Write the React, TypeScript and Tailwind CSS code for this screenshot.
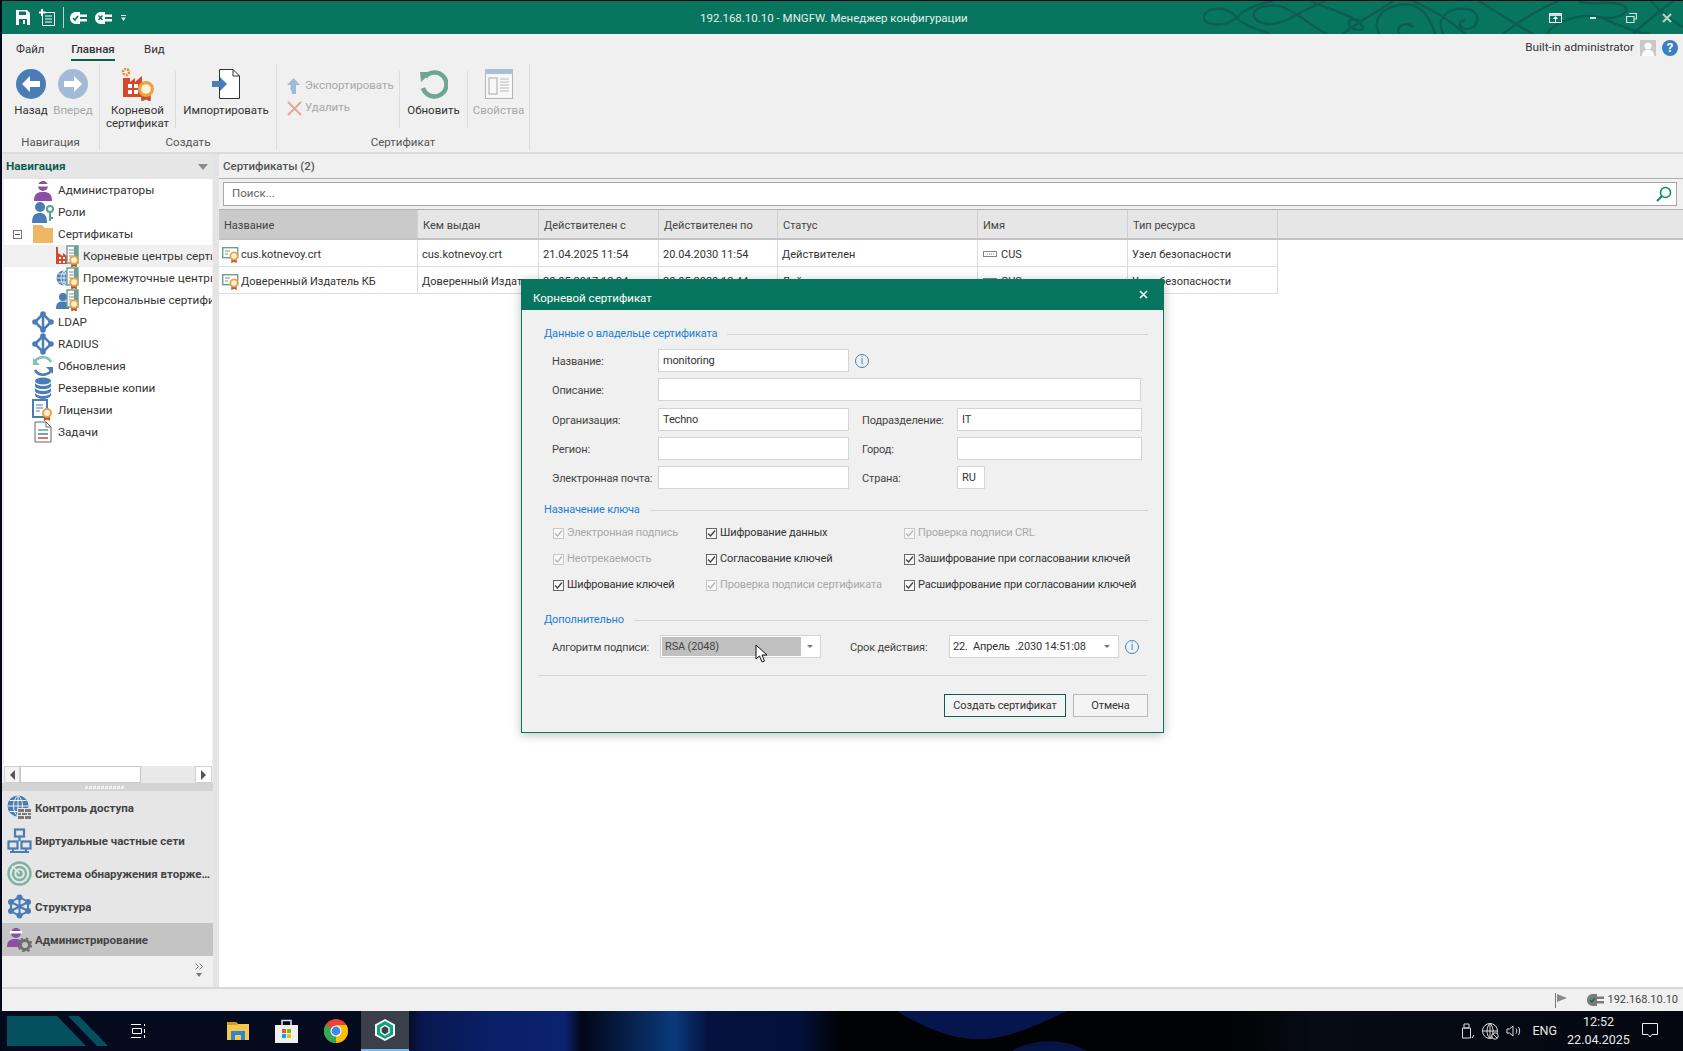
import { ReactNode } from "react";

const Medal = ({ x = 0, y = 0, s = 1 }: { x?: number; y?: number; s?: number }) => (
    <g transform={`translate(${x} ${y}) scale(${s})`}>
        <path d="M-3 3 L-3 8 L0 6.5 L3 8 L3 3 Z" fill="#c9502f" />
        <circle cx="0" cy="0" r="4" fill="#fdf3e0" stroke="#eda33e" strokeWidth="2" />
    </g>
);

const CertDoc = ({ x = 0, y = 0 }: { x?: number; y?: number }) => (
    <g transform={`translate(${x} ${y})`}>
        <path d="M0 0 H11 V17 H0 Z" fill="#ffffff" stroke="#6b9f92" strokeWidth="1.4" />
        <path d="M7 0 H11 V17 H7 Z" fill="#6b9f92" />
        <path d="M2 4 H7 M2 7 H7 M2 10 H5" stroke="#8a8a8a" strokeWidth="1" />
    </g>
);

function NavIcon({ kind }: { kind: string }) {
    const blue = "#4a7db5";
    const body: Record<string, ReactNode> = {
        admin: <><circle cx="11" cy="7" r="5" fill="#8c4fa3" /><rect x="5" y="5" width="12" height="2.5" fill="#fff" /><path d="M2 22 C2 14 6 13 11 13 C16 13 20 14 20 22 Z" fill="#8c4fa3" /></>,
        roles: <><circle cx="8" cy="6" r="5" fill={blue} /><path d="M0 22 C0 14 3 12 8 12 C12 12 15 14 15 22 Z" fill={blue} /><circle cx="18" cy="8" r="3" fill="none" stroke="#55a58e" strokeWidth="2" /><path d="M18 11 V20 M18 17 H21" stroke="#55a58e" strokeWidth="2" /></>,
        folder: <path d="M1 2 H10 L13 5 H21 V20 H1 Z" fill="#edb765" />,
        ldap: <><path d="M11 3 L3 11 L11 19 L19 11 Z M11 3 V19" fill="none" stroke={blue} strokeWidth="2.5" /><circle cx="11" cy="3" r="2.8" fill={blue} /><circle cx="11" cy="19" r="2.8" fill={blue} /><circle cx="3" cy="11" r="2.8" fill={blue} /><circle cx="19" cy="11" r="2.8" fill={blue} /></>,
        update: <><path d="M2 9 C4 1 15 0 19 7" fill="none" stroke="#7fc4ae" strokeWidth="2.6" /><path d="M1 3 L1 10 L8 10 Z" fill="#7fc4ae" /><path d="M20 13 C18 21 7 22 3 15" fill="none" stroke={blue} strokeWidth="2.6" /><path d="M21 19 L21 12 L14 12 Z" fill={blue} /></>,
        backup: <><ellipse cx="11" cy="4" rx="8" ry="3.4" fill={blue} /><path d="M3 6 C5 10 17 10 19 6 V9.5 C17 13 5 13 3 9.5 Z M3 11 C5 15 17 15 19 11 V14.5 C17 18 5 18 3 14.5 Z M3 16 C5 20 17 20 19 16 V18.5 C17 23 5 23 3 18.5 Z" fill={blue} /></>,
        license: <><rect x="1" y="1" width="14" height="17" fill="#fff" stroke={blue} strokeWidth="2" /><path d="M4 6 H11 M4 9 H11 M4 12 H8" stroke={blue} strokeWidth="1.2" /><Medal x={15} y={14} s={1} /></>,
        tasks: <><path d="M3 1 H14 L19 6 V21 H3 Z" fill="#fff" stroke="#666" strokeWidth="1" /><path d="M14 1 V6 H19" fill="none" stroke="#666" /><path d="M6 9 H16" stroke="#55a58e" strokeWidth="1.5" /><path d="M6 13 H16" stroke={blue} strokeWidth="1.5" /><path d="M6 17 H16" stroke="#d6472e" strokeWidth="1.5" /></>,
    };
    return <svg width="22" height="22" viewBox="0 0 22 22" className="shrink-0">{body[kind]}</svg>;
}

function SubIcon({ kind }: { kind: string }) {
    const blue = "#4a7db5";
    return (
        <svg width="23" height="22" viewBox="0 0 23 22" className="shrink-0">
            {kind === "root" && <path d="M0 19 V2 H2 V8 L7 11 V8 L11 11 V19 Z" fill="#d6472e" />}
            {kind === "root" && <path d="M3 12 H5 V14 H3 Z M7 12 H9 V14 H7 Z M3 16 H5 V18 H3 Z M7 16 H9 V18 H7 Z" fill="#fff" />}
            {kind === "mid" && <><circle cx="8" cy="11" r="7.5" fill={blue} /><path d="M0.5 11 H15.5 M8 3.5 V18.5 M2 7 H14 M2 15 H14 M8 3.5 C4 7 4 15 8 18.5 M8 3.5 C12 7 12 15 8 18.5" stroke="#fff" strokeWidth="0.8" fill="none" /></>}
            {kind === "pers" && <><circle cx="7" cy="8" r="4" fill={blue} /><path d="M0 20 C0 13 3 12.5 7 12.5 C11 12.5 13 14 13 20 Z" fill={blue} /></>}
            <CertDoc x={11} y={1} />
            <Medal x={18} y={15} s={0.95} />
        </svg>
    );
}

function Plug({ color, mark, w = 17 }: { color: string; mark: "check" | "x"; w?: number }) {
    return (
        <svg width={w} height="12" viewBox="0 0 17 12">
            <path d="M6 0 C2.5 0 0 2.5 0 6 C0 9.5 2.5 12 6 12 H10 V0 Z" fill={color} />
            <path d="M10 2.5 H17 V5 H10 Z M10 7 H17 V9.5 H10 Z" fill={color} />
            {mark === "check"
                ? <path d="M3 6 L5 8 L8 4" stroke="#08755f" strokeWidth="1.6" fill="none" />
                : <path d="M3.5 3.5 L7.5 8 M7.5 3.5 L3.5 8" stroke="#08755f" strokeWidth="1.5" />}
        </svg>
    );
}

function TitlePattern() {
    return (
        <svg width="480" height="33" viewBox="0 0 480 33" className="absolute right-0 top-0" fill="none" stroke="#0c5e52" strokeWidth="2.4">
            <path d="M0 16 C4 6 22 4 32 15 C42 26 56 28 66 33" />
            <path d="M0 16 C2 26 24 26 34 16 C44 6 58 2 70 0" />
            <path d="M50 14 C52 4 72 2 84 8 C100 16 112 28 124 33" />
            <path d="M50 14 C54 24 70 26 86 18 C100 10 112 4 122 0" />
            <path d="M108 0 C122 8 150 12 160 26 C162 30 150 30 146 24 C144 18 154 16 158 22" />
            <path d="M140 33 C150 24 176 10 190 0" />
            <path d="M176 33 C170 20 176 8 196 4 C214 0 226 12 232 33" />
            <path d="M196 33 C192 24 204 20 210 26" />
            <path d="M210 0 C228 8 246 18 262 33" />
            <path d="M240 33 C232 16 246 6 264 8 C280 10 276 30 262 28 C254 26 256 18 262 20" />
            <path d="M276 0 C292 10 310 22 330 33" />
            <path d="M300 33 C316 20 340 6 356 0" />
            <path d="M344 33 C352 20 378 12 396 16 C416 20 430 10 420 4 C404 -2 386 6 376 0" />
            <path d="M396 16 C416 24 436 33 448 33" />
            <path d="M430 33 C440 24 456 10 470 0" />
            <path d="M448 0 C458 12 472 22 480 26" />
        </svg>
    );
}

function TitleBar() {
    return (
        <div className="relative h-[33px] shrink-0 bg-[#08755f] flex items-center pl-[14px] overflow-hidden">
            <TitlePattern />
            <svg width="14" height="15" viewBox="0 0 14 15"><path d="M0 0 H11 L14 3 V15 H0 Z" fill="#fff" /><path d="M3 1.5 H10 V5 H3 Z M3 9 H11 V15 H3 Z" fill="#08755f" /><path d="M7 10 H9 V14 H7 Z" fill="#fff" /></svg>
            <svg width="16" height="17" viewBox="0 0 16 17" className="ml-[9px]"><path d="M3.5 3.5 H15.5 V16.5 H3.5 Z" fill="#08755f" stroke="#fff" /><path d="M6 7 H13 M6 10 H13 M6 13 H13" stroke="#fff" /><path d="M3 0 V7 M0 3.5 H6.5" stroke="#fff" strokeWidth="2" /></svg>
            <div className="w-px h-[21px] bg-[#b5d5cd] ml-[8px] mr-[6px]" />
            <Plug color="#fff" mark="check" />
            <div className="w-[8px]" />
            <Plug color="#fff" mark="x" />
            <svg width="5" height="6" viewBox="0 0 5 6" className="ml-[9px]"><path d="M0 0 H5 V1 H0 Z M0 2.5 H5 L2.5 6 Z" fill="#e8f2f0" /></svg>
            <div className="absolute left-[698px] top-[9px] text-[11.5px] leading-[16px] text-[#e3f0ed] whitespace-nowrap">192.168.10.10 - MNGFW. Менеджер конфигурации</div>
            <div className="absolute right-[11px] top-[12px] flex items-center">
                <svg width="13" height="10" viewBox="0 0 13 10"><path d="M0.5 0.5 H12.5 V9.5 H0.5 Z" fill="none" stroke="#fff" /><path d="M1 2 H12" stroke="#fff" strokeWidth="1.6" /><path d="M6.5 3 L4 6 H6 V9 H7 V6 H9 Z" fill="#fff" /></svg>
                <div className="w-[6px] h-[2px] bg-[#cfe3dd] ml-[28px]" />
                <svg width="11" height="10" viewBox="0 0 11 10" className="ml-[30px]"><path d="M3 0.5 H10.5 V6 H8 M0.5 3.5 H8 V9.5 H0.5 Z" fill="none" stroke="#cfe3dd" strokeWidth="1.2" /></svg>
                <svg width="10" height="10" viewBox="0 0 10 10" className="ml-[25px]"><path d="M1 1 L9 9 M9 1 L1 9" stroke="#b9d2cc" strokeWidth="2" /></svg>
            </div>
        </div>
    );
}

function BigBtn({ icon, label, off, className }: { icon: ReactNode; label: ReactNode; off?: boolean; className: string }) {
    return (
        <div className={`flex flex-col items-center shrink-0 ${className}`}>
            <div className="h-[40px] flex items-center justify-center">{icon}</div>
            <div className={`text-center leading-[13px] whitespace-nowrap ${off ? "text-[#a8a8a8]" : "text-[#333]"}`}>{label}</div>
        </div>
    );
}

const RibbonSep = () => <div className="w-px h-[57px] mt-[7px] bg-[#dcdcdc] shrink-0" />;

function Ribbon() {
    return (
        <div className="h-[120px] shrink-0 bg-[#f0f0f0] border-b-[2px] border-[#dcdcdc] text-[11.5px]">
            <div className="h-[30px] flex items-start text-[#333]">
                <div className="ml-[14px] w-[55px] mt-[7px] leading-[16px]">Файл</div>
                <div className="w-[44px] mt-[7px] h-[20px] leading-[16px] border-b-[2px] border-[#0a5f50] text-center font-medium">Главная</div>
                <div className="ml-[29px] mt-[7px] leading-[16px]">Вид</div>
                <div className="ml-auto mt-[4px] flex items-center h-[20px] pr-[5px] text-[11.75px]">
                    <span>Built-in administrator</span>
                    <svg width="16" height="16" viewBox="0 0 16 16" className="ml-[6px]"><rect width="16" height="16" fill="#c8c8c8" /><circle cx="8" cy="6" r="3.6" fill="#fff" /><path d="M2 16 C2 11 5 10 8 10 C11 10 14 11 14 16 Z" fill="#fff" /></svg>
                    <div className="ml-[6px] w-[16px] h-[16px] rounded-full bg-[#3a7fc0] text-white text-[13px] leading-[16px] font-bold text-center">?</div>
                </div>
            </div>
            <div className="flex h-[86px]">
                <div className="w-[98px] border-r border-[#dcdcdc] flex flex-col">
                    <div className="h-[70px] flex pl-[8px]">
                        <BigBtn className="w-[42px]" label="Назад" icon={<svg width="30" height="30" viewBox="0 0 30 30"><circle cx="15" cy="15" r="15" fill="#4a7db5" /><path d="M6 15 L14 7 V12 H24 V18 H14 V23 Z" fill="#fff" /></svg>} />
                        <BigBtn className="w-[42px]" off label="Вперед" icon={<svg width="30" height="30" viewBox="0 0 30 30"><circle cx="15" cy="15" r="15" fill="#a2bad6" /><path d="M24 15 L16 7 V12 H6 V18 H16 V23 Z" fill="#fff" /></svg>} />
                    </div>
                    <div className="text-center text-[#555] leading-[16px]">Навигация</div>
                </div>
                <div className="w-[177px] border-r border-[#dcdcdc] flex flex-col">
                    <div className="h-[70px] flex">
                        <BigBtn className="w-[75px]" label={<>Корневой<br />сертификат</>} icon={
                            <svg width="33" height="34" viewBox="0 0 33 34">
                                <circle cx="5" cy="5" r="3" fill="none" stroke="#ea8b35" strokeWidth="2.5" strokeDasharray="2 1" />
                                <path d="M2 30 V11 H9 V15 L14 11 V15 L21 9 V30 Z" fill="#d6472e" />
                                <path d="M7 17 H11 V21 H7 Z M13 17 H17 V21 H13 Z M7 23 H11 V27 H7 Z M13 23 H17 V27 H13 Z" fill="#fff" />
                                <Medal x={25} y={22} s={1.6} />
                            </svg>} />
                        <RibbonSep />
                        <BigBtn className="w-[100px]" label="Импортировать" icon={
                            <svg width="28" height="30" viewBox="0 0 28 30">
                                <path d="M7.5 0.5 H21 L27.5 7 V29.5 H7.5 Z" fill="#fff" stroke="#333" />
                                <path d="M21 0.5 V7 H27.5" fill="none" stroke="#333" />
                                <path d="M0 12 H8 V8 L15 15 L8 22 V18 H0 Z" fill="#4a7db5" />
                            </svg>} />
                    </div>
                    <div className="text-center text-[#555] leading-[16px]">Создать</div>
                </div>
                <div className="w-[253px] border-r border-[#dcdcdc] flex flex-col">
                    <div className="h-[70px] flex">
                        <div className="w-[122px] pl-[10px] pt-[11px] text-[#a8a8a8] shrink-0">
                            <div className="h-[22px] flex items-center gap-[5px]">
                                <svg width="13" height="16" viewBox="0 0 13 16"><path d="M6.5 0 L13 7 H9 V16 H5 C5 12 3 11 3 11 L4 7 H0 Z" fill="#a2bad6" /></svg>
                                Экспортировать
                            </div>
                            <div className="h-[22px] flex items-center gap-[3px]">
                                <svg width="15" height="15" viewBox="0 0 15 15"><path d="M1 1 L14 14 M14 1 L1 14" stroke="#e4a696" strokeWidth="2" /></svg>
                                Удалить
                            </div>
                        </div>
                        <RibbonSep />
                        <BigBtn className="w-[67px]" label="Обновить" icon={
                            <svg width="28" height="30" viewBox="0 0 28 30">
                                <path d="M5 8 A12 12 0 1 1 3 19" fill="none" stroke="#6fa595" strokeWidth="4.5" />
                                <path d="M0 3 L12 3 L1 13 Z" fill="#6fa595" />
                            </svg>} />
                        <RibbonSep />
                        <BigBtn className="w-[61px]" off label="Свойства" icon={
                            <svg width="28" height="30" viewBox="0 0 28 30">
                                <rect x="0.5" y="0.5" width="27" height="29" fill="#f8f8f8" stroke="#b3b3b3" />
                                <rect width="28" height="5" fill="#a9bfd9" />
                                <rect x="4" y="9" width="8" height="16" fill="none" stroke="#a8a8a8" />
                                <path d="M15 10 H24 M15 13 H24 M15 16 H24 M15 19 H24 M15 22 H24" stroke="#b8b8b8" />
                            </svg>} />
                    </div>
                    <div className="text-center text-[#555] leading-[16px]">Сертификат</div>
                </div>
            </div>
        </div>
    );
}

const treeRows = [
    { kind: "admin", text: "Администраторы" },
    { kind: "roles", text: "Роли" },
    { kind: "folder", text: "Сертификаты", box: true },
    { sub: "root", text: "Корневые центры сертификации", sel: true },
    { sub: "mid", text: "Промежуточные центры сертификации" },
    { sub: "pers", text: "Персональные сертификаты" },
    { kind: "ldap", text: "LDAP" },
    { kind: "ldap", text: "RADIUS" },
    { kind: "update", text: "Обновления" },
    { kind: "backup", text: "Резервные копии" },
    { kind: "license", text: "Лицензии" },
    { kind: "tasks", text: "Задачи" },
];

function OutlookRow({ icon, text, active }: { icon: ReactNode; text: string; active?: boolean }) {
    return (
        <div className={`h-[33px] flex items-center pl-[5px] font-bold text-[#444] whitespace-nowrap text-[11.5px] ${active ? "bg-[#c4c4c4]" : ""}`}>
            <div className="w-[25px] h-[25px] flex items-center shrink-0">{icon}</div>
            <span className="ml-[3px] pt-[2px] truncate">{text}</span>
        </div>
    );
}

function NavPanel() {
    const blue = "#4a7db5";
    return (
        <div className="w-[211px] shrink-0 flex flex-col bg-[#f0f0f0]">
            <div className="h-[25px] shrink-0 bg-[#e6e6e6] flex items-center pl-[4px] pr-[5px] font-bold text-[#0a5f50] text-[11.75px]">
                Навигация
                <div className="ml-auto w-0 h-0 border-x-[5px] border-x-transparent border-t-[6px] border-t-[#8a8a8a]" />
            </div>
            <div className="h-[587px] shrink-0 ml-[2px] w-[208px] bg-white overflow-hidden text-[#333] whitespace-nowrap text-[11.75px]">
                {treeRows.map((r) => (
                    <div key={r.text} className={`h-[22px] flex items-center ${r.sel ? "bg-[#f0f0f0]" : ""}`}>
                        {r.sub ? (
                            <><div className="w-[52px] shrink-0" /><SubIcon kind={r.sub} /><span className="ml-[4px] pt-[2px]">{r.text}</span></>
                        ) : (
                            <>
                                <div className="w-[28px] shrink-0 pl-[9px]">
                                    {r.box && <div className="w-[9px] h-[9px] border border-[#777] flex items-center justify-center"><div className="w-[5px] h-px bg-[#555]" /></div>}
                                </div>
                                <NavIcon kind={r.kind as string} />
                                <span className="ml-[4px] pt-[2px]">{r.text}</span>
                            </>
                        )}
                    </div>
                ))}
            </div>
            <div className="h-[17px] ml-[2px] w-[208px] shrink-0 bg-[#e9e9e9] flex">
                <div className="w-[16px] border border-[#d0d0d0] bg-[#f4f4f4] flex items-center justify-center"><div className="border-y-[5px] border-y-transparent border-r-[5px] border-r-[#555]" /></div>
                <div className="w-[121px] bg-white border border-[#c8c8c8]" />
                <div className="ml-auto w-[17px] border border-[#d0d0d0] bg-white flex items-center justify-center"><div className="border-y-[5px] border-y-transparent border-l-[5px] border-l-[#555]" /></div>
            </div>
            <div className="h-[8px] shrink-0 bg-[#d4d4d4] flex items-center justify-center gap-px pr-[6px]">
                {Array.from({ length: 10 }).map((_, i) => <div key={i} className="w-[3px] h-[3px] bg-[#f0f0f0]" />)}
            </div>
            <div className="bg-[#e6e6e6]">
                <OutlookRow text="Контроль доступа" icon={
                    <svg width="25" height="25" viewBox="0 0 25 25"><circle cx="11" cy="11" r="10.5" fill={blue} /><path d="M0.5 11 H21.5 M11 0.5 V21.5 M2.5 5.5 H19.5 M2.5 16.5 H19.5 M11 0.5 C5 5 5 17 11 21.5 M11 0.5 C17 5 17 17 11 21.5" stroke="#fff" strokeWidth="0.9" fill="none" /><path d="M10 13 H24 V24 H10 Z" fill="#e6e6e6" /><path d="M11 14 H17 V17 H11 Z M18 14 H24 V17 H18 Z M11 18 H14 V20 H11 Z M15 18 H20 V20 H15 Z M21 18 H24 V20 H21 Z M11 21 H17 V24 H11 Z M18 21 H24 V24 H18 Z" fill="#7a7a7a" /></svg>} />
                <OutlookRow text="Виртуальные частные сети" icon={
                    <svg width="25" height="25" viewBox="0 0 25 25" fill="none" stroke={blue} strokeWidth="2.2"><rect x="8" y="1.5" width="9" height="7" /><rect x="1.5" y="13.5" width="9" height="7" /><rect x="14.5" y="13.5" width="9" height="7" /><path d="M12.5 9 V13 M6 20.5 V24 M3 24 H9 M19 20.5 V24 M16 24 H22 M9 24 H16" /></svg>} />
                <OutlookRow text="Система обнаружения вторжений" icon={
                    <svg width="25" height="25" viewBox="0 0 25 25" fill="none" stroke="#7eb3a3" strokeWidth="2.4"><circle cx="12.5" cy="12.5" r="11" /><circle cx="12.5" cy="12.5" r="6.5" /><circle cx="12.5" cy="12.5" r="2" fill="#7eb3a3" /><path d="M12.5 12.5 L5 5" strokeWidth="1.6" stroke="#e6e6e6" /></svg>} />
                <OutlookRow text="Структура" icon={
                    <svg width="25" height="25" viewBox="0 0 25 25" fill="none" stroke={blue} strokeWidth="2"><path d="M12.5 3 L21 8 V17 L12.5 22 L4 17 V8 Z M12.5 3 V22 M4 8 L21 17 M21 8 L4 17" /><g fill={blue} stroke="none"><circle cx="12.5" cy="3.5" r="3" /><circle cx="12.5" cy="21.5" r="3" /><circle cx="4" cy="8" r="3" /><circle cx="21" cy="8" r="3" /><circle cx="4" cy="17" r="3" /><circle cx="21" cy="17" r="3" /></g></svg>} />
                <OutlookRow active text="Администрирование" icon={
                    <svg width="25" height="25" viewBox="0 0 25 25"><circle cx="9" cy="6" r="5" fill="#8c4fa3" /><rect x="3" y="4" width="12" height="2.5" fill="#fff" /><path d="M0 20 C0 13 4 12 9 12 C12 12 14 13 15 14 L12 20 Z" fill="#8c4fa3" /><circle cx="18" cy="18" r="4.5" fill="none" stroke="#6e6e6e" strokeWidth="3" /><circle cx="18" cy="18" r="6.5" fill="none" stroke="#6e6e6e" strokeWidth="2" strokeDasharray="2.5 2.6" /></svg>} />
            </div>
            <div className="flex-1 flex flex-col items-end pr-[10px] pt-[7px]">
                <svg width="8" height="7" viewBox="0 0 8 7" fill="none" stroke="#777"><path d="M0.5 0.5 L3.5 3.5 L0.5 6.5 M4.5 0.5 L7.5 3.5 L4.5 6.5" /></svg>
                <div className="mt-[3px] mr-px w-0 h-0 border-x-[3px] border-x-transparent border-t-[4px] border-t-[#777]" />
            </div>
        </div>
    );
}

const CertIcon = () => (
    <svg width="17" height="17" viewBox="0 0 17 17" className="shrink-0">
        <rect x="0.7" y="1.7" width="15" height="10" fill="#fff" stroke="#6b9f92" strokeWidth="1.4" />
        <path d="M3 5 H8 M3 8 H6" stroke="#8a8a8a" />
        <Medal x={12} y={10} s={0.9} />
    </svg>
);

const cols = [
    { w: "w-[199px]", title: "Название" },
    { w: "w-[121px]", title: "Кем выдан" },
    { w: "w-[120px]", title: "Действителен с" },
    { w: "w-[119px]", title: "Действителен по" },
    { w: "w-[200px]", title: "Статус" },
    { w: "w-[150px]", title: "Имя" },
    { w: "w-[150px]", title: "Тип ресурса" },
];

const rows = [
    ["cus.kotnevoy.crt", "cus.kotnevoy.crt", "21.04.2025 11:54", "20.04.2030 11:54", "Действителен", "CUS", "Узел безопасности"],
    ["Доверенный Издатель КБ", "Доверенный Издатель КБ", "20.05.2017 12:34", "20.05.2020 12:44", "Действителен", "CUS", "Узел безопасности"],
];

function ContentPanel() {
    return (
        <div className="flex-1 flex flex-col bg-white min-w-0 text-[11px]">
            <div className="h-[24px] shrink-0 bg-[#f0f0f0] pl-[4px] pt-[2px] flex items-center font-medium text-[#555] text-[11.5px]">Сертификаты (2)</div>
            <div className="h-[32px] shrink-0 bg-[#f0f0f0] border-y border-[#b0b0b0] flex items-center pl-[4px] pr-[6px]">
                <div className="flex-1 h-[24px] bg-white border border-[#a8a8a8] flex items-center pl-[8px] pr-[4px] text-[#666] text-[11.5px]">
                    Поиск...
                    <svg width="16" height="16" viewBox="0 0 16 16" className="ml-auto" fill="none" stroke="#0a8a6a" strokeWidth="1.5"><circle cx="9.5" cy="6.5" r="5" /><path d="M6 10 L1 15" strokeWidth="2" /></svg>
                </div>
            </div>
            <div className="h-[30px] shrink-0 bg-[#e6e6e6] border-b-[2px] border-[#c2c2c2] flex">
                {cols.map((c, i) => (
                    <div key={c.title} className={`${c.w} shrink-0 flex items-center pl-[5px] pt-[5px] text-[#444] border-r border-[#cfcfcf] ${i === 0 ? "bg-[#cacaca]" : ""}`}>{c.title}</div>
                ))}
            </div>
            {rows.map((r, ri) => (
                <div key={ri} className="h-[27px] shrink-0 flex">
                    {r.map((v, i) => (
                        <div key={i} className={`${cols[i].w} shrink-0 flex items-center pl-[4px] pt-[2px] text-[#333] border-r border-b border-[#dcdcdc] whitespace-nowrap overflow-hidden`}>
                            {i === 0 && <span className="mr-[2px] -ml-[1px] flex"><CertIcon /></span>}
                            {i === 5 && <svg width="14" height="6" viewBox="0 0 14 6" className="mr-[4px] ml-px"><rect x="0.5" y="0.5" width="13" height="5" fill="#fff" stroke="#7a8a85" /><path d="M4 3 H11" stroke="#7a8a85" strokeDasharray="1 1" /></svg>}
                            <span className="pt-[2px]">{v}</span>
                        </div>
                    ))}
                </div>
            ))}
        </div>
    );
}

function Field({ value, className }: { value?: string; className: string }) {
    return <div className={`h-[23px] bg-white border border-[#d4d4d4] flex items-center pl-[4px] pt-[2px] text-[#333] shrink-0 ${className}`}>{value}</div>;
}

function Section({ title, className }: { title: string; className: string }) {
    return (
        <div className={`h-[16px] flex items-center ml-[22px] mr-[15px] gap-[10px] pt-[2px] ${className}`}>
            <span className="text-[#1a7fd0] whitespace-nowrap">{title}</span>
            <div className="flex-1 h-px bg-[#d4d4d4]" />
        </div>
    );
}

const InfoIcon = ({ className }: { className: string }) => (
    <div className={`w-[14px] h-[14px] rounded-full border border-[#3a86c8] text-[#3a86c8] text-[10px] leading-[12px] text-center shrink-0 ${className}`}>i</div>
);

function Check({ label, off }: { label: string; off?: boolean }) {
    return (
        <div className={`h-[26px] flex items-center whitespace-nowrap ${off ? "text-[#a8a8a8]" : "text-[#333]"}`}>
            <div className={`w-[11px] h-[11px] border flex items-center justify-center mr-[3px] bg-[#f8f8f8] ${off ? "border-[#c8c8c8]" : "border-[#666]"}`}>
                <svg width="9" height="9" viewBox="0 0 9 9"><path d="M1 4.5 L3.5 7 L8 1.5" fill="none" stroke={off ? "#b5b5b5" : "#444"} strokeWidth="1.3" /></svg>
            </div>
            <span className="pt-px">{label}</span>
        </div>
    );
}

function Label({ children, className }: { children: string; className: string }) {
    return <div className={`shrink-0 text-[#444] whitespace-nowrap pt-[3px] ${className}`}>{children}</div>;
}

function Dialog() {
    return (
        <div className="absolute left-[521px] top-[279px] w-[643px] h-[454px] bg-[#f0f0f0] border-[1.5px] border-[#08755f] shadow-[0_2px_10px_rgba(0,0,0,0.25)] text-[#333] text-[11px] tracking-[-0.15px]">
            <div className="h-[30px] bg-[#08755f] flex items-start text-white">
                <div className="ml-[11px] mt-[10px] leading-[16px] text-[11.5px] tracking-normal">Корневой сертификат</div>
                <svg width="9" height="9" viewBox="0 0 9 9" className="ml-auto mr-[15px] mt-[10px]"><path d="M1 1 L8 8 M8 1 L1 8" stroke="#fff" strokeWidth="1.6" /></svg>
            </div>
            <Section title="Данные о владельце сертификата" className="mt-[15px]" />
            <div className="mt-[8px] flex flex-col gap-[6px] pl-[30px]">
                <div className="flex items-center"><Label className="w-[106px]">Название:</Label><Field value="monitoring" className="w-[191px]" /><InfoIcon className="ml-[6px]" /></div>
                <div className="flex items-center"><Label className="w-[106px]">Описание:</Label><Field className="w-[483px]" /></div>
                <div className="flex items-center mt-px"><Label className="w-[106px]">Организация:</Label><Field value="Techno" className="w-[191px]" /><Label className="w-[108px] pl-[13px]">Подразделение:</Label><Field value="IT" className="w-[185px]" /></div>
                <div className="flex items-center"><Label className="w-[106px]">Регион:</Label><Field className="w-[191px]" /><Label className="w-[108px] pl-[13px]">Город:</Label><Field className="w-[185px]" /></div>
                <div className="flex items-center"><Label className="w-[106px]">Электронная почта:</Label><Field className="w-[191px]" /><Label className="w-[108px] pl-[13px]">Страна:</Label><Field value="RU" className="w-[28px]" /></div>
            </div>
            <Section title="Назначение ключа" className="mt-[12px]" />
            <div className="mt-[3px] pl-[31px] grid grid-cols-[153px_198px_1fr]">
                <Check off label="Электронная подпись" />
                <Check label="Шифрование данных" />
                <Check off label="Проверка подписи CRL" />
                <Check off label="Неотрекаемость" />
                <Check label="Согласование ключей" />
                <Check label="Зашифрование при согласовании ключей" />
                <Check label="Шифрование ключей" />
                <Check off label="Проверка подписи сертификата" />
                <Check label="Расшифрование при согласовании ключей" />
            </div>
            <Section title="Дополнительно" className="mt-[13px]" />
            <div className="mt-[8px] pl-[30px] flex items-center relative">
                <Label className="w-[108px]">Алгоритм подписи:</Label>
                <div className="w-[161px] h-[23px] bg-white border border-[#d4d4d4] flex items-center shrink-0 pl-px py-px pr-[7px]">
                    <div className="w-[139px] h-full bg-[#c0c0c0] flex items-center pl-[3px] pt-[2px] text-[#444]">RSA (2048)</div>
                    <div className="ml-auto w-0 h-0 border-x-[3px] border-x-transparent border-t-[3px] border-t-[#777]" />
                </div>
                <Label className="w-[99px] ml-[29px]">Срок действия:</Label>
                <div className="w-[170px] h-[23px] bg-white border border-[#d4d4d4] flex items-center pl-[3px] pr-[8px] shrink-0 whitespace-nowrap">
                    <span className="pt-[2px]">22.&nbsp; Апрель&nbsp; .2030 14:51:08</span>
                    <div className="ml-auto w-0 h-0 border-x-[3px] border-x-transparent border-t-[3px] border-t-[#777]" />
                </div>
                <InfoIcon className="ml-[6px]" />
                <svg width="14" height="20" viewBox="0 0 14 20" className="absolute left-[233px] top-[9px]"><path d="M1 1 L1 15 L4.5 12 L7 18 L9.5 17 L7 11 L12 11 Z" fill="#fff" stroke="#111" strokeWidth="1" /></svg>
            </div>
            <div className="mt-[17px] mx-[16px] h-px bg-[#d4d4d4]" />
            <div className="mt-[18px] flex justify-end gap-[7px] pr-[15px]">
                <div className="w-[122px] h-[23px] border-[1.5px] border-[#0a5f50] bg-[#f4f4f4] flex items-center justify-center pt-[2px]">Создать сертификат</div>
                <div className="w-[75px] h-[23px] border border-[#b8b8b8] bg-[#f4f4f4] flex items-center justify-center pt-[2px]">Отмена</div>
            </div>
        </div>
    );
}

// wallpaper showing through the transparent taskbar
function TaskbarWallpaper() {
    return (
        <svg width="1681" height="40" viewBox="0 0 1681 40" className="absolute left-0 top-0">
            <defs>
                <linearGradient id="wall" x1="0" x2="1681" y1="0" y2="0" gradientUnits="userSpaceOnUse">
                    <stop offset="0.24" stopColor="#050b1e" />
                    <stop offset="0.25" stopColor="#08174f" />
                    <stop offset="0.29" stopColor="#0a1f66" />
                    <stop offset="0.335" stopColor="#0b2270" />
                    <stop offset="0.345" stopColor="#020617" />
                    <stop offset="0.40" stopColor="#0a3a7c" />
                    <stop offset="0.42" stopColor="#05123f" />
                    <stop offset="0.475" stopColor="#04103a" />
                    <stop offset="0.50" stopColor="#010204" />
                    <stop offset="0.73" stopColor="#010204" />
                    <stop offset="0.78" stopColor="#060b14" />
                    <stop offset="1" stopColor="#04070f" />
                </linearGradient>
            </defs>
            <rect width="1681" height="40" fill="url(#wall)" />
            <path d="M895 0 C930 22 960 30 985 28 C1010 26 1040 12 1065 0 Z" fill="#07154d" />
            <path d="M1010 40 C1030 28 1060 26 1085 40 Z" fill="#061345" />
        </svg>
    );
}

function Taskbar() {
    return (
        <div className="relative h-[40px] shrink-0 flex items-center text-white">
            <TaskbarWallpaper />
            <svg width="102" height="30" viewBox="0 0 102 30" className="relative ml-[5px] shrink-0"><path d="M0 0 H50 L79 30 H0 Z M61 0 H72 L101 30 H90 Z" fill="#04505f" /></svg>
            <svg width="16" height="16" viewBox="0 0 16 16" className="relative ml-[21px] shrink-0" fill="none" stroke="#fff"><path d="M1 1.5 H11 M1 14.5 H11 M2.5 5.5 H11.5 V10.5 H2.5 Z M14.5 1 V3 M14.5 6 V10 M14.5 12 V15" /></svg>
            <svg width="22" height="18" viewBox="0 0 22 18" className="relative ml-[81px] shrink-0"><path d="M0 0 H9 L11 2 H22 V18 H0 Z" fill="#f5c94e" /><path d="M0 0 H9 L11 3 H0 Z" fill="#d99a1c" /><path d="M4 9 H18 V18 H14 V13 H8 V18 H4 Z" fill="#2e86d0" /></svg>
            <svg width="23" height="24" viewBox="0 0 23 24" className="relative ml-[26px] shrink-0"><path d="M7 6 V1.5 H16 V6" fill="none" stroke="#ddd" strokeWidth="1.6" /><path d="M0 6 H23 V24 H0 Z" fill="#f0f0f0" /><rect x="7" y="10" width="4" height="4" fill="#e8542a" /><rect x="12" y="10" width="4" height="4" fill="#7fba00" /><rect x="7" y="15" width="4" height="4" fill="#00a4ef" /><rect x="12" y="15" width="4" height="4" fill="#ffb900" /></svg>
            <svg width="24" height="24" viewBox="0 0 24 24" className="relative ml-[26px] shrink-0"><circle cx="12" cy="12" r="12" fill="#ea4335" /><path d="M1.6 6 A12 12 0 0 0 12 24 L12 12 Z" fill="#34a853" /><path d="M12 6 H22.4 A12 12 0 0 1 12 24 L12 12 Z" fill="#fbbc05" /><circle cx="12" cy="12" r="5.5" fill="#fff" /><circle cx="12" cy="12" r="4.4" fill="#4285f4" /></svg>
            <div className="relative ml-[13px] w-[48px] h-[40px] bg-[#3a3f4a] border-b-[2px] border-[#76b9ed] flex items-center justify-center shrink-0">
                <svg width="22" height="24" viewBox="0 0 22 24"><path d="M11 1 L21 6.5 V17.5 L11 23 L1 17.5 V6.5 Z" fill="#fff" /><path d="M11 3 L19 7.5 V16.5 L11 21 L3 16.5 V7.5 Z" fill="#10a37f" /><path d="M11 7.5 L15 10 V14.5 L11 17 L7 14.5 V10 Z" fill="#3a3f4a" stroke="#fff" strokeWidth="1.4" /></svg>
            </div>
            <div className="relative ml-auto flex items-center shrink-0 h-full">
                <svg width="14" height="16" viewBox="0 0 14 16" fill="none" stroke="#ddd"><path d="M3 1 H8 V5 H3 Z M1.5 5 H9.5 V15 H1.5 Z M11 15 L13 12" /></svg>
                <svg width="17" height="17" viewBox="0 0 17 17" fill="none" stroke="#ddd" className="ml-[7px]"><circle cx="8" cy="8" r="7.5" /><path d="M0.5 8 H15.5 M8 0.5 V15.5 M8 0.5 C4 4 4 12 8 15.5 M8 0.5 C12 4 12 12 8 15.5" /><circle cx="13" cy="13" r="3.2" fill="#04070f" /><path d="M11 11 L15 15" /></svg>
                <svg width="16" height="14" viewBox="0 0 16 14" fill="none" stroke="#ddd" className="ml-[7px]"><path d="M1 5 H3.5 L7 2 V12 L3.5 9 H1 Z M10 4.5 C11 6 11 8 10 9.5 M12.5 3 C14 5.5 14 8.5 12.5 11" /></svg>
                <div className="ml-[10px] text-[12.5px] text-[#e8e8e8]">ENG</div>
                <div className="w-[80px] pl-[3px] text-center text-[12.5px] leading-[18px] text-[#e8e8e8]">12:52<br />22.04.2025</div>
                <svg width="16" height="16" viewBox="0 0 16 16" fill="none" stroke="#eee" className="ml-[5px] mr-[25px]"><path d="M0.5 0.5 H15.5 V11.5 H10 L8 14 L6 11.5 H0.5 Z" /></svg>
            </div>
        </div>
    );
}

export default function App() {
    return (
        <div className="relative w-[1683px] h-[1051px] overflow-hidden bg-[#03081a] pl-[2px] pt-px flex flex-col font-['Roboto',sans-serif] text-[12px]">
            <TitleBar />
            <Ribbon />
            <div className="flex-1 flex min-h-0">
                <NavPanel />
                <div className="w-[6px] shrink-0 bg-[#e4e4e4]" />
                <ContentPanel />
            </div>
            <div className="h-[24px] shrink-0 bg-[#f0f0f0] border-t-[2px] border-[#d8d8d8] flex items-center text-[#444] text-[11px]">
                <div className="ml-auto flex items-center pr-[5px]">
                    <svg width="12" height="15" viewBox="0 0 12 15"><path d="M0.5 0 V15" stroke="#777" /><path d="M2 1 L12 5 L2 9 Z" fill="#8a8a8a" /></svg>
                    <div className="ml-[20px] flex"><Plug color="#7a7a7a" mark="check" /></div>
                    <span className="ml-[3px]">192.168.10.10</span>
                </div>
            </div>
            <Taskbar />
            <Dialog />
        </div>
    );
}
